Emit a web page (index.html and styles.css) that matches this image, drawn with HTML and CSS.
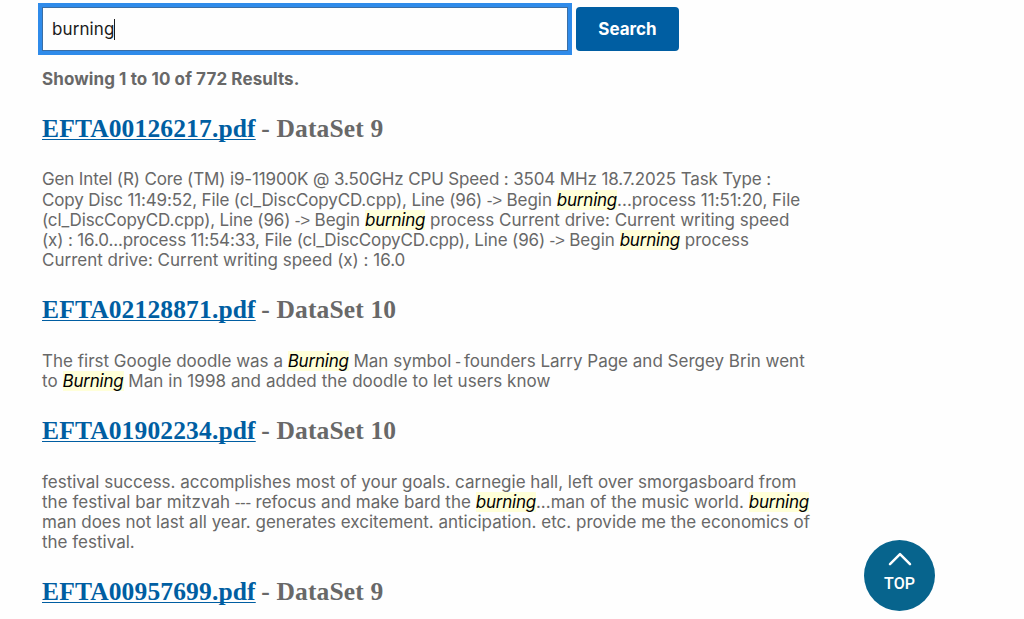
FILE: index.html
```
<!DOCTYPE html>
<html lang="en">
<head>
<meta charset="utf-8">
<title>Search results</title>
<link rel="stylesheet" href="styles.css">
</head>
<body>
<main class="page">
  <form class="search">
    <div class="search-field"><span class="query">burning</span><span class="caret"></span></div>
    <button class="search-button" type="button">Search</button>
  </form>
  <p class="summary">Showing 1 to 10 of 772 Results.</p>

  <article class="result">
    <h3 class="title"><a class="file" href="#">EFTA00126217.pdf</a> <span class="dataset">- DataSet 9</span></h3>
    <p class="excerpt">
      <span class="line tight">Gen Intel (R) Core (TM) i9-11900K @ 3.50GHz CPU Speed : 3504 MHz 18.7.2025 Task Type :</span>
      <span class="line"><span class="tight">Copy Disc 11:49:52, File (cl_DiscCopyCD.cpp), Line (96)</span><span class="arrow"> -&gt; </span>Begin <em>burning</em>...process 11:51:20, File</span>
      <span class="line"><span class="tight">(cl_DiscCopyCD.cpp), Line (96)</span><span class="arrow"> -&gt; </span>Begin <em>burning</em> process Current drive: Current writing speed</span>
      <span class="line"><span class="tight">(x) : 16.0...process 11:54:33, File (cl_DiscCopyCD.cpp), Line (96)</span><span class="arrow"> -&gt; </span>Begin <em>burning</em> process</span>
      <span class="line">Current drive: Current writing speed (x) : 16.0</span>
    </p>
  </article>

  <article class="result">
    <h3 class="title"><a class="file" href="#">EFTA02128871.pdf</a> <span class="dataset">- DataSet 10</span></h3>
    <p class="excerpt">
      <span class="line">The first Google doodle was a <em>Burning</em> Man symbol<span class="dash"> - </span>founders Larry Page and Sergey Brin went</span>
      <span class="line loose">to <em>Burning</em> Man in 1998 and added the doodle to let users know</span>
    </p>
  </article>

  <article class="result">
    <h3 class="title"><a class="file" href="#">EFTA01902234.pdf</a> <span class="dataset">- DataSet 10</span></h3>
    <p class="excerpt">
      <span class="line">festival success. accomplishes most of your goals. carnegie hall, left over smorgasboard from</span>
      <span class="line"><span class="loose">the festival bar mitzvah</span><span class="arrow"> --- </span>refocus and make bard the <em>burning</em>...man of the music world. <em>burning</em></span>
      <span class="line">man does not last all year. generates excitement. anticipation. etc. provide me the economics of</span>
      <span class="line">the festival.</span>
    </p>
  </article>

  <article class="result">
    <h3 class="title"><a class="file" href="#">EFTA00957699.pdf</a> <span class="dataset">- DataSet 9</span></h3>
  </article>
</main>
<a class="top" href="#">
  <svg class="chevron" viewBox="0 0 24 14" aria-hidden="true"><path d="M2 12.2 12 2.2 22 12.2"/></svg>
  <span>TOP</span>
</a>
</body>
</html>
```
FILE: styles.css
```
* { box-sizing: border-box; }
html { overflow: hidden; }
body { margin: 0; background: #fefefe; color: #686868; font-family: Inter, "Liberation Sans", sans-serif; }
.page { height: 619px; padding: 7px 0 0 42px; overflow: hidden; }
.search { display: flex; gap: 8px; height: 44px; margin: 0; }
.search-field {
  display: flex; align-items: center; width: 526px; padding-left: 9px;
  background: #fefefe; border: 1px solid #3a6ea5; outline: 4px solid #2f8bea;
  color: #1b1b1b; font-size: 17px; letter-spacing: 0.1px;
}
.caret { width: 1px; height: 21px; background: #1b1b1b; }
.search-button {
  width: 103px; padding: 0; border: 0; border-radius: 4px; background: #005ea2; color: #fff;
  font: 700 17px/44px Inter, "Liberation Sans", sans-serif;
}
.summary { margin: 18px 0 24px; font-size: 17px; font-weight: 700; line-height: 21px; letter-spacing: 0.1px; white-space: nowrap; }
.title {
  display: flex; gap: 6px; height: 30px; margin: 0 0 25.4px; white-space: nowrap;
  font: 700 25.5px/30px "Liberation Serif", serif; letter-spacing: 0.15px;
}
.file { color: #005ea2; text-decoration: underline; text-decoration-thickness: 1px; text-underline-offset: 2px; text-decoration-skip-ink: none; }
.dataset { margin-left: -0.5px; }
.excerpt { margin: 0 0 25px; font-size: 17px; line-height: 20.2px; font-feature-settings: "calt" 0; }
.line { display: block; white-space: nowrap; }
.tight { letter-spacing: -0.14px; }
.loose { letter-spacing: 0.05px; }
.arrow, .dash { font-family: "Liberation Sans", sans-serif; line-height: 1; }
.arrow { letter-spacing: -0.2px; }
.dash { letter-spacing: -0.85px; }
em { background: #ffffd8; color: #000; letter-spacing: -0.22px; }
.top {
  position: fixed; left: 864px; top: 540px; width: 71px; height: 71px; border-radius: 50%;
  display: flex; flex-direction: column; align-items: center; padding-top: 12px; gap: 8px;
  background: #07648d; color: #fff; text-decoration: none;
  font: 500 16px/20px Roboto, sans-serif;
}
.chevron { width: 24px; height: 14px; fill: none; stroke: #fff; stroke-width: 2.5; stroke-linecap: round; stroke-linejoin: round; }
```
